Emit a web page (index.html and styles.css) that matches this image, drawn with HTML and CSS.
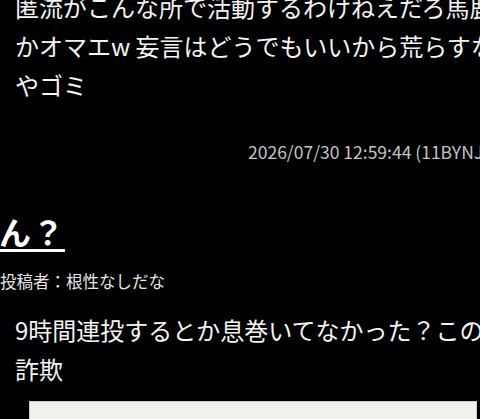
FILE: index.html
```html
<!DOCTYPE html>
<html lang="ja">
<head>
<meta charset="utf-8">
<title>スレッド</title>
<link rel="stylesheet" href="styles.css">
</head>
<body>
<div class="page">
  <article class="post">
    <p class="post-body post-body--first">匿流がこんな所で活動するわけねえだろ馬鹿<br>かオマエw 妄言はどうでもいいから荒らすな<br>やゴミ</p>
    <div class="post-meta">2026/07/30 12:59:44 (11BYNJ0k)</div>
  </article>
  <section class="thread">
    <h2 class="thread-title"><span class="thread-title-text">ん？</span></h2>
    <div class="thread-author">投稿者：根性なしだな</div>
    <p class="post-body">9時間連投するとか息巻いてなかった？この<br>詐欺</p>
    <div class="reply-box"></div>
  </section>
</div>
</body>
</html>
```

FILE: styles.css
```css
html, body {
  margin: 0;
  padding: 0;
  background: #000;
  overflow: hidden;
}
body {
  font-family: "Noto Sans CJK JP", "Noto Sans", sans-serif;
  color: #fff;
}
.page {
  width: 600px;
  display: flex;
  flex-direction: column;
}
.post {
  display: flex;
  flex-direction: column;
}
.post-body {
  margin: 0;
  padding-left: 15px;
  font-size: 24px;
  line-height: 39px;
  white-space: nowrap;
  color: #f4f4f4;
}
.post-body--first {
  margin-top: -13px;
}
.post-meta {
  margin-top: 33.9px;
  padding-left: 248px;
  font-size: 17.5px;
  line-height: 27px;
  color: #c4c4c4;
  white-space: nowrap;
}
.thread {
  display: flex;
  flex-direction: column;
}
.thread-title {
  margin: 47px 0 0 -1px;
  font-size: 32px;
  line-height: 38.4px;
  font-weight: 700;
  letter-spacing: 1px;
}
.thread-title-text {
  text-decoration: underline;
  text-decoration-thickness: 3px;
  text-underline-offset: 4px;
}
.thread-author {
  margin-top: 19px;
  font-size: 16.5px;
  line-height: 24px;
  color: #e6e6e6;
  white-space: nowrap;
}
.thread .post-body {
  margin-top: 16.5px;
}
.reply-box {
  margin: 13px 0 0 29px;
  width: 446px;
  height: 60px;
  background: #f1f0ec;
  border: 1px solid #c9c9c6;
}
```
